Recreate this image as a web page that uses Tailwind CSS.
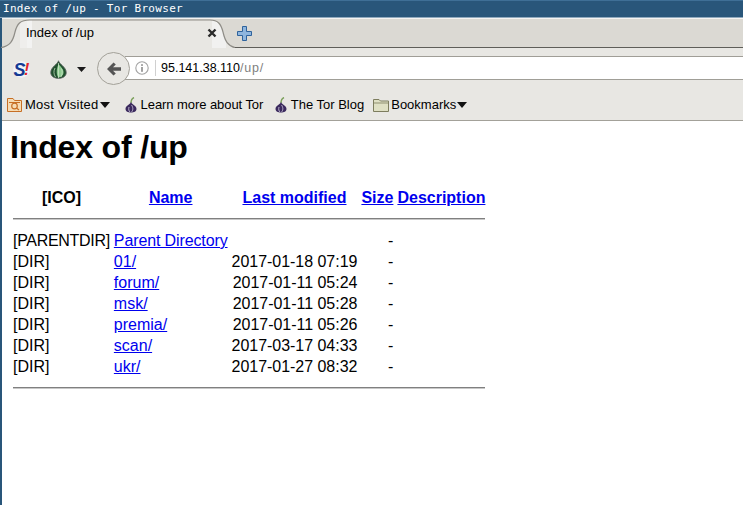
<!DOCTYPE html>
<html lang="en">
  <head>
    <meta charset="UTF-8" />
    <title>Index of /up - Tor Browser</title>
    <script src="https://cdn.jsdelivr.net/npm/@tailwindcss/browser@4"></script>
  </head>
  <body class="bg-white overflow-hidden font-['Liberation_Sans',Arial,sans-serif]">
    <div class="h-[505px] flex flex-col">
      <!-- window title -->
      <div class="h-[18px] shrink-0 bg-[#29567a] border-t border-[#3f6f96] border-b border-b-[#8fa9bd] text-white font-['DejaVu_Sans_Mono',monospace] text-[11px] tracking-[0.3px] leading-[16px] pl-[3px]">Index of /up - Tor Browser</div>

      <div class="flex-1 flex flex-col border-l-2 border-[#29567a] min-h-0">
        <!-- tab strip -->
        <div class="h-[30px] shrink-0 bg-[#dbd9d3] border-t border-[#f4f3f1] border-b border-b-[#5f5e59] flex items-start">
          <div class="relative w-[230px] h-[28px] shrink-0">
            <svg class="absolute left-0 top-0 overflow-visible" width="230" height="29" viewBox="0 0 230 29">
              <defs>
                <clipPath id="tabshape"><path d="M-1 29 C8 27 11 22 13 13 C15 5 18 1 28 1 L208 1 C216 1 219 5 221 13 C223 22 226 27 233 29 Z"/></clipPath>
              </defs>
              <path d="M-1 29 C8 27 11 22 13 13 C15 5 18 1 28 1 L208 1 C216 1 219 5 221 13 C223 22 226 27 233 29 Z" fill="#e8e7e3"/>
              <g clip-path="url(#tabshape)">
                <rect x="25" y="0" width="5" height="29" fill="#f3f3f2"/>
                <rect x="18" y="0" width="7" height="29" fill="#efeeec"/>
                <rect x="210" y="0" width="14" height="29" fill="#f1f1f0"/>
              </g>
              <path d="M-1 28.5 C8 27 11 22 13 13 C15 5 18 1 28 1 L208 1 C216 1 219 5 221 13 C223 22 226 27 233 28.5" fill="none" stroke="#8f8d87" stroke-width="1.2"/>
            </svg>
            <span class="absolute left-[24px] top-[6px] text-[13px] leading-[16px] text-black">Index of /up</span>
            <svg class="absolute left-[205px] top-[9px]" width="10" height="10" viewBox="0 0 10 10">
              <path d="M1.5 1.5 L8.5 8.5 M8.5 1.5 L1.5 8.5" stroke="#2b2b2b" stroke-width="2.4"/>
            </svg>
          </div>
          <svg class="ml-[5px] mt-[7px] shrink-0" width="15" height="15" viewBox="0 0 15 15">
            <path d="M5.5 .5 H9.5 V5.5 H14.5 V9.5 H9.5 V14.5 H5.5 V9.5 H.5 V5.5 H5.5 Z" fill="#8fb6de" stroke="#2f639c"/>
          </svg>
        </div>

        <!-- nav bar -->
        <div class="h-[42px] shrink-0 bg-[#e8e7e3] relative flex items-center">
          <svg class="ml-[11px] mt-[1px] shrink-0" width="17" height="17" viewBox="0 0 17 17">
            <circle cx="8.5" cy="8.5" r="8.3" fill="#f1f3f8"/>
            <text x="0.5" y="14.5" font-family="Liberation Sans" font-weight="700" font-style="italic" font-size="18" fill="#143a93">S</text>
            <text x="11" y="14" font-family="Liberation Sans" font-weight="700" font-style="italic" font-size="16" fill="#e0242b">!</text>
          </svg>
          <svg class="ml-[20px] shrink-0" width="17" height="19" viewBox="0 0 17 19">
            <path d="M8.5 .8 C9 4 16.2 7 16.2 12.5 C16.2 16.5 12.5 18.3 8.5 18.3 C4.5 18.3 .8 16.5 .8 12.5 C.8 7 8 4 8.5 .8 Z" fill="#20512d" stroke="#56605a" stroke-width=".9"/>
            <path d="M8.5 4 C10.5 7 14 9 13.5 13 C13.2 15.5 11 17.2 8.5 17.6 C7 16 6.5 13 6.8 10 C7 8 7.8 6 8.5 4 Z" fill="#8ecb90"/>
            <path d="M8.5 3 V18 M5 8 C3.5 11 3.5 14 5.5 17 M11.5 8.5 C12.5 11 12.5 14 11 17" stroke="#d4e8d0" stroke-width=".7" fill="none"/>
          </svg>
          <svg class="ml-[10px] shrink-0" width="9" height="5" viewBox="0 0 9 5"><path d="M0 0 H9 L4.5 5 Z" fill="#1a1a1a"/></svg>

          <!-- url bar -->
          <div class="absolute left-[123px] right-0 top-[8px] h-[24px] bg-white border-y border-[#a09e97] flex items-center">
            <svg class="ml-[10px] shrink-0" width="14" height="14" viewBox="0 0 14 14">
              <circle cx="7" cy="7" r="6.2" fill="none" stroke="#a3a3a3" stroke-width="1.1"/>
              <rect x="6.2" y="6" width="1.6" height="4.8" fill="#8a8a8a"/>
              <rect x="6.2" y="3.2" width="1.6" height="1.7" fill="#8a8a8a"/>
            </svg>
            <div class="ml-[6px] w-px h-[16px] bg-[#d0d0d0]"></div>
            <span class="ml-[5px] pt-px text-[12.5px] text-black">95.141.38.110<span class="text-[#808080] tracking-[0.8px]">/up/</span></span>
          </div>
          <!-- back button -->
          <div class="absolute left-[95px] top-[4px] w-[33px] h-[33px] rounded-full bg-[#e8e7e3] border border-[#a3a199] flex items-center justify-center">
            <svg width="16" height="14" viewBox="0 0 16 14">
              <path d="M7.5 .5 L1 7 L7.5 13.5 L9.8 11.5 L7 8.8 H15 V5.2 H7 L9.8 2.5 Z" fill="#555555"/>
            </svg>
          </div>
        </div>

        <!-- bookmarks bar -->
        <div class="h-[31px] shrink-0 bg-[#e8e7e3] border-b border-[#a3a199] flex items-center text-[13px] text-black pl-[5px] pb-[1px]">
          <svg class="shrink-0" width="15" height="15" viewBox="0 0 15 15">
            <path d="M.5 14.5 V1.5 H6 L7.5 3.5 H14.5 V14.5 Z" fill="#f6dcb4" stroke="#c76f25"/>
            <circle cx="7.5" cy="9" r="2.8" fill="none" stroke="#c76f25" stroke-width="1.2"/>
            <path d="M2 5.5 H13 M9.5 11 L12 13" stroke="#c76f25" stroke-width="1.2"/>
          </svg>
          <span class="ml-[3px] tracking-[0.25px]">Most Visited</span>
          <svg class="ml-[1px] shrink-0" width="10" height="6" viewBox="0 0 10 6"><path d="M0 0 H10 L5 6 Z" fill="#111"/></svg>
          <svg class="ml-[15px] shrink-0" width="12" height="16" viewBox="0 0 12 16">
            <path d="M6 6 C6 3 7 1.5 9 .5" stroke="#7ba05b" stroke-width="1.4" fill="none"/>
            <path d="M6 5 C7 7.5 11.5 8.5 11.5 12 C11.5 14.5 9 15.5 6 15.5 C3 15.5 .5 14.5 .5 12 C.5 8.5 5 7.5 6 5 Z" fill="#3b2a5e"/>
            <path d="M6.5 8 C8 10 8.5 13 6.5 15 M4 10 C3.4 12 3.8 14 5 15" stroke="#d9d3e6" stroke-width=".8" fill="none"/>
          </svg>
          <span class="ml-[4px] tracking-[-0.07px]">Learn more about Tor</span>
          <svg class="ml-[11.5px] shrink-0" width="12" height="16" viewBox="0 0 12 16">
            <path d="M6 6 C6 3 7 1.5 9 .5" stroke="#7ba05b" stroke-width="1.4" fill="none"/>
            <path d="M6 5 C7 7.5 11.5 8.5 11.5 12 C11.5 14.5 9 15.5 6 15.5 C3 15.5 .5 14.5 .5 12 C.5 8.5 5 7.5 6 5 Z" fill="#3b2a5e"/>
            <path d="M6.5 8 C8 10 8.5 13 6.5 15 M4 10 C3.4 12 3.8 14 5 15" stroke="#d9d3e6" stroke-width=".8" fill="none"/>
          </svg>
          <span class="ml-[4px]">The Tor Blog</span>
          <svg class="ml-[9px] shrink-0" width="16" height="14" viewBox="0 0 16 14">
            <path d="M.5 13.5 V1.5 H6 L7.5 3 H15.5 V13.5 Z" fill="#dfe0c4" stroke="#7d7d5e"/>
            <path d="M1 5 H15" stroke="#8f8f70"/>
          </svg>
          <span class="ml-[2px]">Bookmarks</span>
          <svg class="ml-[1px] shrink-0" width="10" height="6" viewBox="0 0 10 6"><path d="M0 0 H10 L5 6 Z" fill="#111"/></svg>
        </div>

        <!-- page -->
        <div class="flex-1 bg-white px-[8px] text-black text-[16px] leading-[17px]">
          <h1 class="text-[32px] leading-[37px] font-bold tracking-[-0.15px] mt-[8px] mb-[20px]">Index of /up</h1>
          <table class="border-separate border-spacing-[2px]">
            <tbody>
              <tr>
                <th class="p-px font-bold">[ICO]</th>
                <th class="p-px font-bold"><a href="#" class="text-[#0000ee] underline">Name</a></th>
                <th class="p-px font-bold"><a href="#" class="text-[#0000ee] underline">Last modified</a></th>
                <th class="p-px font-bold"><a href="#" class="text-[#0000ee] underline">Size</a></th>
                <th class="p-px font-bold"><a href="#" class="text-[#0000ee] underline">Description</a></th>
              </tr>
              <tr><th colspan="5" class="p-px"><div class="h-[2px] my-[8px] bg-[#808080] border-b border-[#c8c8c8]"></div></th></tr>
              <tr>
                <td class="p-px tracking-[-0.3px]">[PARENTDIR]</td>
                <td class="p-px tracking-[-0.12px]"><a href="#" class="text-[#0000ee] underline">Parent Directory</a></td>
                <td class="p-px text-right"></td>
                <td class="p-px text-right">-</td>
                <td class="p-px"></td>
              </tr>
              <tr>
                <td class="p-px">[DIR]</td>
                <td class="p-px"><a href="#" class="text-[#0000ee] underline">01/</a></td>
                <td class="p-px text-right tracking-[-0.03px]">2017-01-18 07:19</td>
                <td class="p-px text-right">-</td>
                <td class="p-px"></td>
              </tr>
              <tr>
                <td class="p-px">[DIR]</td>
                <td class="p-px"><a href="#" class="text-[#0000ee] underline">forum/</a></td>
                <td class="p-px text-right tracking-[-0.03px]">2017-01-11 05:24</td>
                <td class="p-px text-right">-</td>
                <td class="p-px"></td>
              </tr>
              <tr>
                <td class="p-px">[DIR]</td>
                <td class="p-px"><a href="#" class="text-[#0000ee] underline">msk/</a></td>
                <td class="p-px text-right tracking-[-0.03px]">2017-01-11 05:28</td>
                <td class="p-px text-right">-</td>
                <td class="p-px"></td>
              </tr>
              <tr>
                <td class="p-px">[DIR]</td>
                <td class="p-px"><a href="#" class="text-[#0000ee] underline">premia/</a></td>
                <td class="p-px text-right tracking-[-0.03px]">2017-01-11 05:26</td>
                <td class="p-px text-right">-</td>
                <td class="p-px"></td>
              </tr>
              <tr>
                <td class="p-px">[DIR]</td>
                <td class="p-px"><a href="#" class="text-[#0000ee] underline">scan/</a></td>
                <td class="p-px text-right tracking-[-0.03px]">2017-03-17 04:33</td>
                <td class="p-px text-right">-</td>
                <td class="p-px"></td>
              </tr>
              <tr>
                <td class="p-px">[DIR]</td>
                <td class="p-px"><a href="#" class="text-[#0000ee] underline">ukr/</a></td>
                <td class="p-px text-right tracking-[-0.03px]">2017-01-27 08:32</td>
                <td class="p-px text-right">-</td>
                <td class="p-px"></td>
              </tr>
              <tr><th colspan="5" class="p-px"><div class="h-[2px] my-[8px] bg-[#808080] border-b border-[#c8c8c8]"></div></th></tr>
            </tbody>
          </table>
        </div>
      </div>
    </div>
  </body>
</html>
